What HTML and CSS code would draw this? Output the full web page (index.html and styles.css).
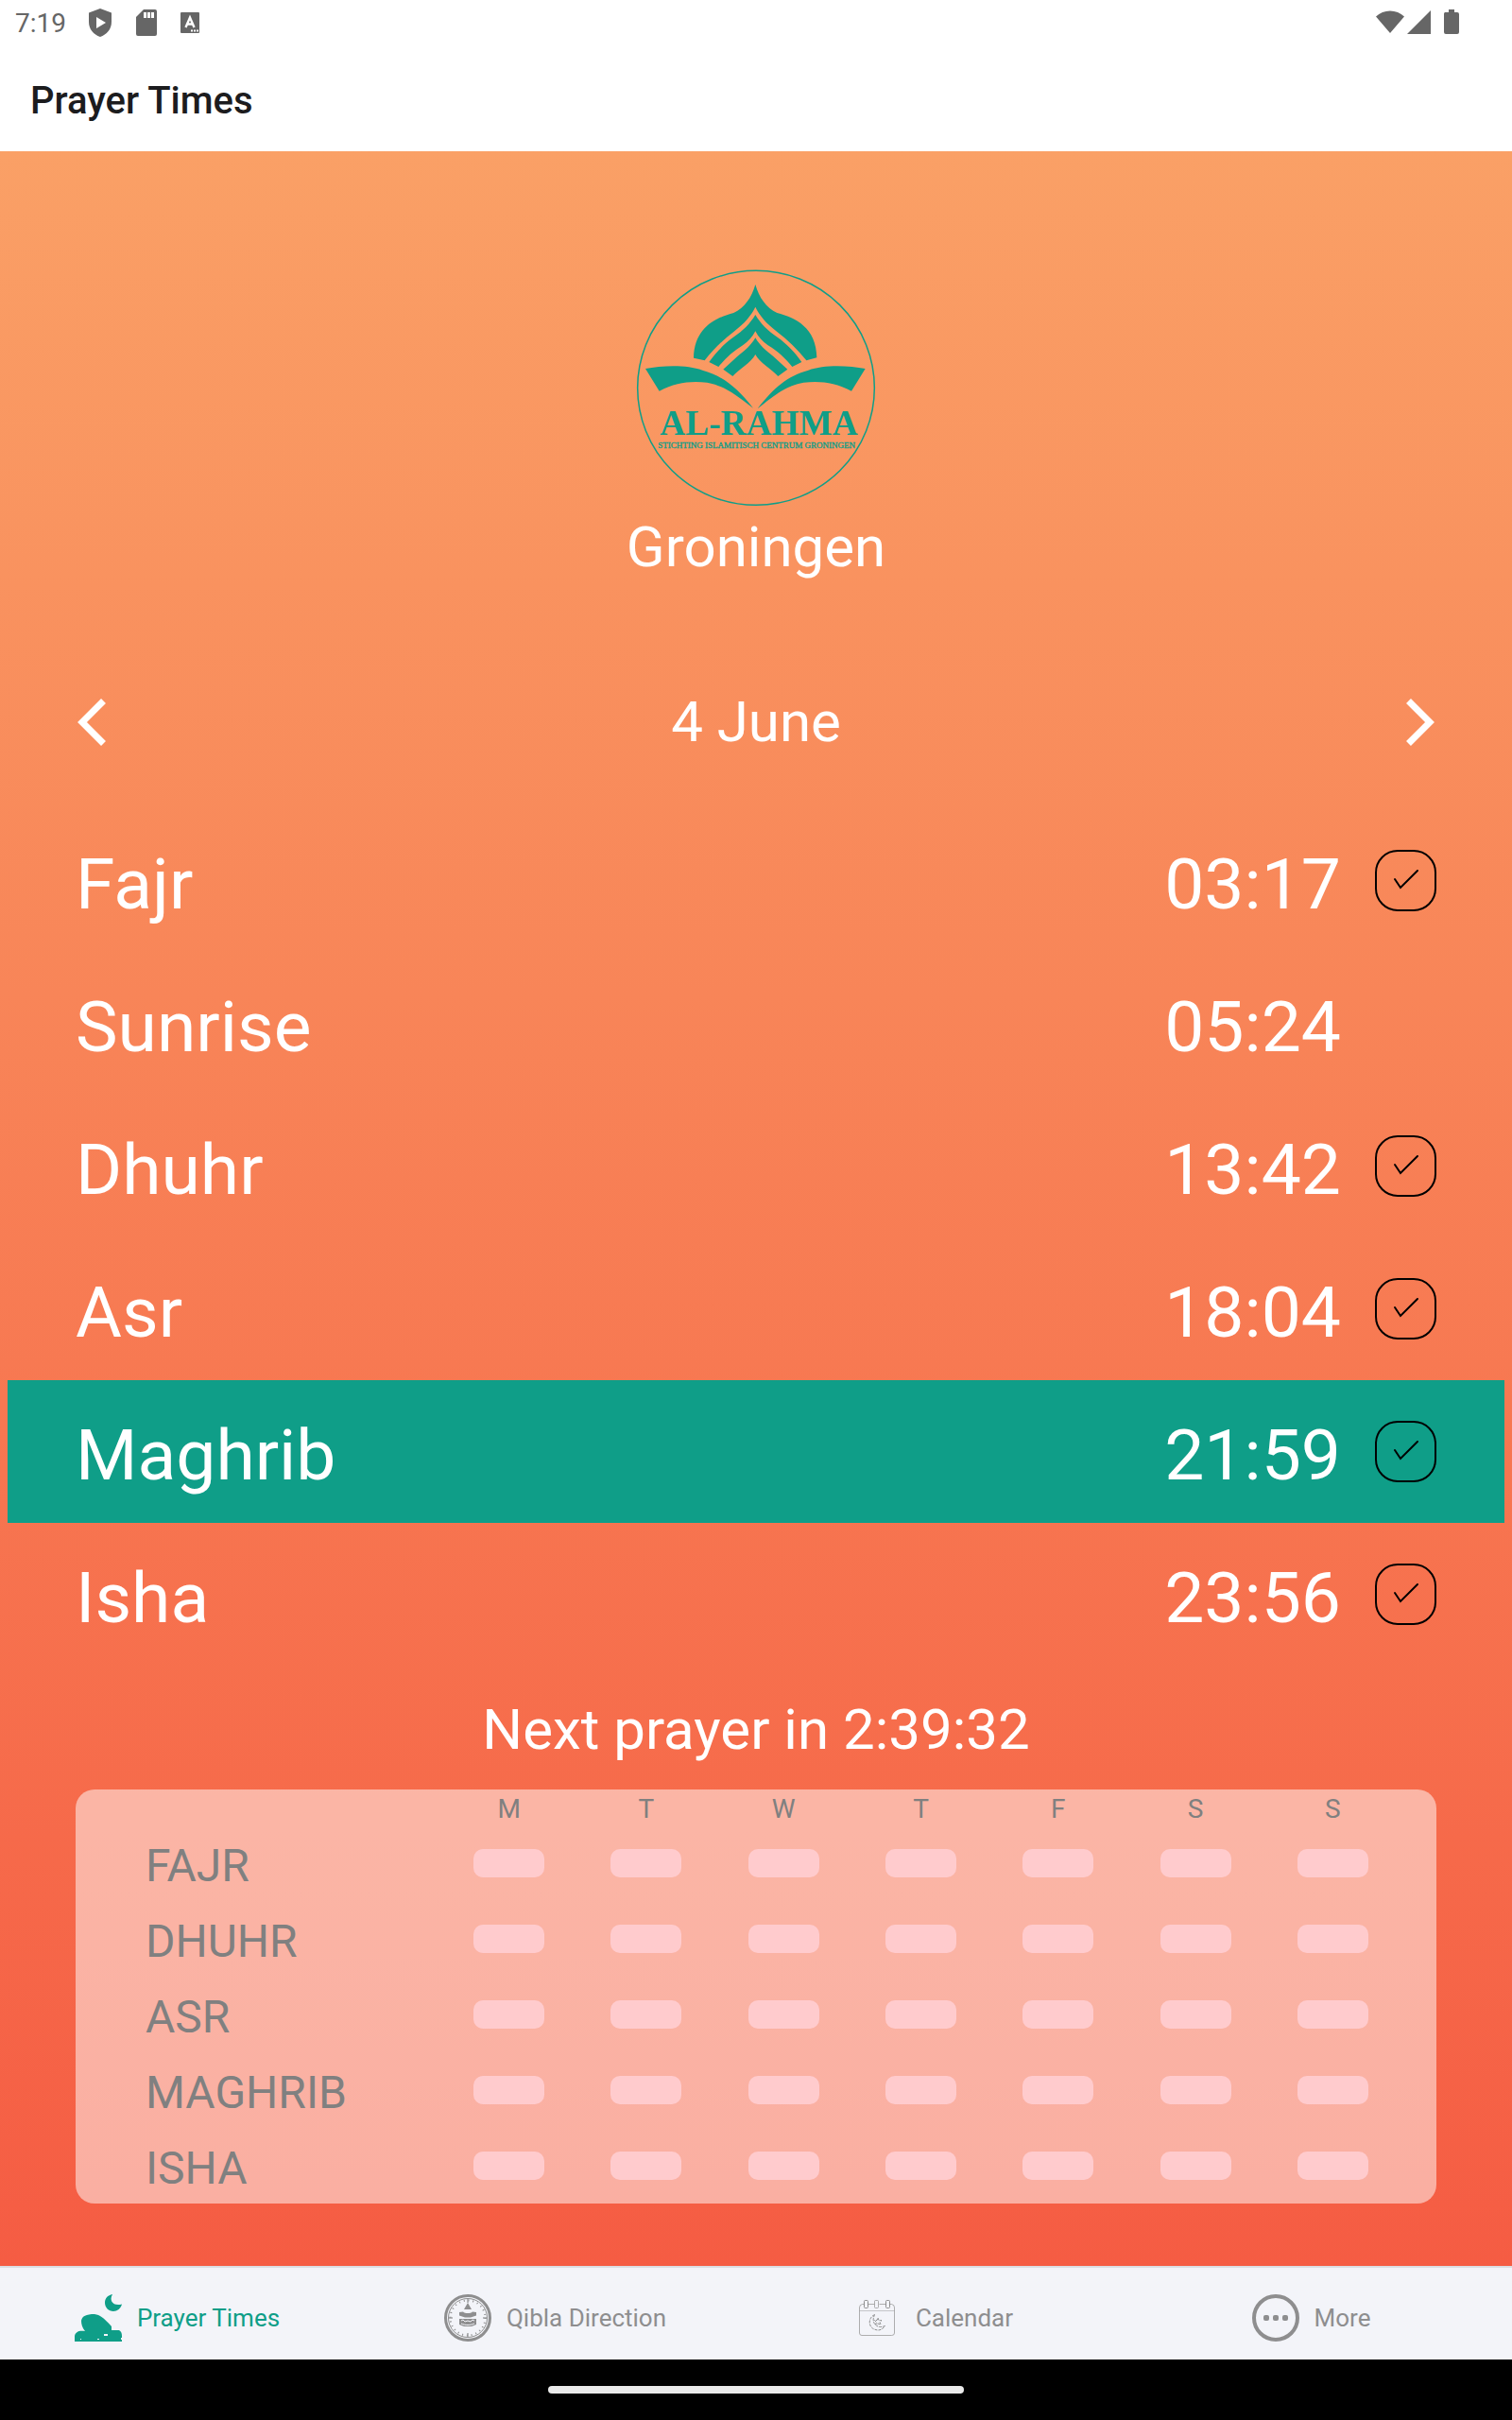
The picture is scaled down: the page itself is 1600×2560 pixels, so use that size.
FILE: index.html
```html
<!DOCTYPE html>
<html lang="en">
<head>
<meta charset="utf-8">
<meta name="viewport" content="width=device-width, initial-scale=1">
<title>Prayer Times</title>
<link rel="stylesheet" href="styles.css">
</head>
<body>
<div class="status">
  <span class="clock">7:19</span>
  <svg class="status-icon" width="26" height="32" viewBox="0 0 26 32"><path fill="currentColor" fill-rule="evenodd" d="M13 1 25 5.500V15c0 8-5 13.500-12 16C6 28.500 1 23 1 15V5.500ZM9 10v12l10-6Z"/></svg>
  <svg class="status-icon" width="22" height="28" viewBox="0 0 22 28"><path fill="currentColor" fill-rule="evenodd" d="M8 0H20a2 2 0 0 1 2 2V26a2 2 0 0 1-2 2H2a2 2 0 0 1-2-2V8ZM8 3V9h3V3ZM12 3V9h3V3ZM16 3V9h3V3Z"/></svg>
  <svg class="status-icon" width="20" height="22" viewBox="0 0 20 22"><path fill="currentColor" d="M1 0H19a1 1 0 0 1 1 1V21a1 1 0 0 1-1 1H1a1 1 0 0 1-1-1V1a1 1 0 0 1 1-1Z"/><path fill="none" stroke="#fff" stroke-width="2.400" d="M5.500 16 10 5.500l4.500 10.500M7 12.500h6"/><path fill="#fff" d="M11 18.500h2v2h-2zM14 18.500h2v2h-2zM17 18.500h2v2h-2z"/></svg>
  <svg class="status-signal" width="90" height="28" viewBox="0 0 90 28"><path fill="currentColor" d="M0 7.500C8-.5 22-.5 30 7.500L15 25ZM33 26 58 1V26ZM73 3H77V0h6V3h3a2 2 0 0 1 2 2V24a2 2 0 0 1-2 2H74a2 2 0 0 1-2-2V5a2 2 0 0 1 1-2Z"/></svg>
</div>
<header class="appbar"><h1>Prayer Times</h1></header>

<main class="screen">
  <svg class="logo" width="254" height="251" viewBox="39 45 762 753" role="img" aria-label="Al-Rahma, Stichting Islamitisch Centrum Groningen">
    <ellipse cx="420" cy="421" rx="376" ry="372" fill="none" stroke="currentColor" stroke-width="4.500"/>
    <g fill="currentColor">
      <path d="M418 93C430 135 452 166 487 183C545 198 612 230 613 325L580 334C553 300 520 268 486 242C450 214 432 192 418 164C404 192 386 214 350 242C316 268 283 300 257 334L222 326C224 230 292 198 349 183C384 166 406 135 418 93Z"/>
      <path d="M418 189C435 217 455 238 490 262C515 280 540 304 565 339L535 354C512 326 488 304 458 286C440 274 428 260 418 241C408 260 396 274 378 286C348 304 324 326 301 354L271 339C296 304 321 280 346 262C381 238 401 217 418 189Z"/>
      <path d="M418 262C432 286 450 302 475 321L520 362L490 384C470 362 432 342 418 315C404 342 366 362 346 384L316 362L361 321C386 302 404 286 418 262Z"/>
      <path d="M69 360C120 350 200 346 250 365C315 383 360 420 411 485C350 438 320 415 265 404C210 398 165 404 113 431Z"/>
      <path d="M767 360C716 350 636 346 586 365C521 383 476 420 425 487C486 438 516 415 571 404C626 398 671 404 723 431Z"/>
      <text class="logo-name" x="429" y="570">AL-RAHMA</text>
      <text class="logo-sub" x="422" y="612">STICHTING ISLAMITISCH CENTRUM GRONINGEN</text>
    </g>
  </svg>
  <p class="headline">Groningen</p>

  <div class="daybar">
    <button type="button" aria-label="Previous day"><svg width="32" height="52" viewBox="0 0 32 52"><path d="M29.500 3.500 7 26 29.500 48.500"/></svg></button>
    <h2 class="headline">4 June</h2>
    <button type="button" aria-label="Next day"><svg width="32" height="52" viewBox="0 0 32 52"><path d="M2.500 3.500 25 26 2.500 48.500"/></svg></button>
  </div>

  <ul class="prayers">
    <li><span class="name">Fajr</span><time>03:17</time><label class="tick"><input type="checkbox" aria-label="Fajr prayed"><svg viewBox="0 0 65 65"><path d="M21 31 27 40 45 22"/></svg></label></li>
    <li><span class="name">Sunrise</span><time>05:24</time><span class="tick"></span></li>
    <li><span class="name">Dhuhr</span><time>13:42</time><label class="tick"><input type="checkbox" aria-label="Dhuhr prayed"><svg viewBox="0 0 65 65"><path d="M21 31 27 40 45 22"/></svg></label></li>
    <li><span class="name">Asr</span><time>18:04</time><label class="tick"><input type="checkbox" aria-label="Asr prayed"><svg viewBox="0 0 65 65"><path d="M21 31 27 40 45 22"/></svg></label></li>
    <li class="current"><span class="name">Maghrib</span><time>21:59</time><label class="tick"><input type="checkbox" aria-label="Maghrib prayed"><svg viewBox="0 0 65 65"><path d="M21 31 27 40 45 22"/></svg></label></li>
    <li><span class="name">Isha</span><time>23:56</time><label class="tick"><input type="checkbox" aria-label="Isha prayed"><svg viewBox="0 0 65 65"><path d="M21 31 27 40 45 22"/></svg></label></li>
  </ul>

  <p class="headline next">Next prayer in 2:39:32</p>

  <section class="week">
    <table>
      <thead><tr><td class="corner"></td><th scope="col">M</th><th scope="col">T</th><th scope="col">W</th><th scope="col">T</th><th scope="col">F</th><th scope="col">S</th><th scope="col">S</th></tr></thead>
      <tbody>
        <tr><th scope="row">FAJR</th><td><i></i></td><td><i></i></td><td><i></i></td><td><i></i></td><td><i></i></td><td><i></i></td><td><i></i></td></tr>
        <tr><th scope="row">DHUHR</th><td><i></i></td><td><i></i></td><td><i></i></td><td><i></i></td><td><i></i></td><td><i></i></td><td><i></i></td></tr>
        <tr><th scope="row">ASR</th><td><i></i></td><td><i></i></td><td><i></i></td><td><i></i></td><td><i></i></td><td><i></i></td><td><i></i></td></tr>
        <tr><th scope="row">MAGHRIB</th><td><i></i></td><td><i></i></td><td><i></i></td><td><i></i></td><td><i></i></td><td><i></i></td><td><i></i></td></tr>
        <tr><th scope="row">ISHA</th><td><i></i></td><td><i></i></td><td><i></i></td><td><i></i></td><td><i></i></td><td><i></i></td><td><i></i></td></tr>
      </tbody>
    </table>
  </section>
</main>

<nav class="tabs">
  <a class="active" href="#prayer" aria-current="page">
    <svg viewBox="0 0 50 50"><path fill="currentColor" d="M40 0C36 7 41 13 50 10.500C49 15 45 18 41 18C36 18 32 14 32 9C32 4 35 1 40 0ZM0 50V44C1 40 4 38 11 39C8 35 7 32 7 28C8 23 12 21 21 21C27 22 30 24 39 34V38H47C49 39 50 41 50 44V50Z"/><path fill="#f3f4f9" d="M31 42h4v2h-4zM24 47h2v1h-2zM6 47h1v1H6zM49 46h1v2h-1z"/></svg>
    <span>Prayer Times</span></a>
  <a href="#qibla">
    <svg viewBox="0 0 50 50" fill="none" stroke="currentColor"><circle cx="25" cy="25" r="23.500" stroke-width="3"/><circle cx="25" cy="25" r="20.500"/><circle cx="25" cy="25" r="18.500" stroke-width="2" stroke-dasharray="1 3.840"/><path opacity=".6" stroke-width="2" d="M25 5v4M25 41v4M5 25h4M41 25h4"/><path fill="currentColor" stroke="none" d="M25 9 29 16H21ZM16 19 20 18.500C22 20.500 28 20.500 30 18.500L34 19V22.500L28 24.500H22L16 22.500ZM16 26 34 26V32L29 34H21L16 32Z"/><path stroke="#f3f4f9" d="M18 28l2-1 2 2 3-1 3 1 2-2 2 1M18 31c4 2 10 2 14 0"/></svg>
    <span>Qibla Direction</span></a>
  <a href="#calendar">
    <svg viewBox="0 0 50 50" fill="none" stroke="currentColor"><path opacity=".7" d="M11.500 10.500H9.500Q6.500 11 6.500 14V41Q6.500 43.500 9 43.500H40.500Q43.500 43.500 43.500 41V14Q43.500 11 40.500 10.500H38.500M15.500 10.500H22.500M27.500 10.500H34.500"/><path opacity=".45" d="M6.500 17.500H43.500"/><rect x="11.500" y="6.500" width="4" height="8" rx="1"/><rect opacity=".7" x="22.500" y="6.500" width="4" height="8" rx="1"/><rect x="34.500" y="6.500" width="4" height="8" rx="1"/><path stroke-dasharray="3 1" d="M22.500 21.500C15 25 15 37 26 38C29 38 32 36 33.500 33.500C26 37 18 31 22.500 21.500ZM26 25l1 2.500h3l-2 2 1 2.500-3-1-2.500 1 1-2.500-2-2h2.500Z"/></svg>
    <span>Calendar</span></a>
  <a href="#more">
    <svg viewBox="0 0 50 50"><circle cx="25" cy="25" r="23" fill="none" stroke="currentColor" stroke-width="4"/><g fill="currentColor"><rect x="12" y="22" width="6" height="6" rx="2"/><rect x="22" y="22" width="6" height="6" rx="2"/><rect x="32" y="22" width="6" height="6" rx="2"/></g></svg>
    <span>More</span></a>
</nav>
<div class="gesture"><span></span></div>
</body>
</html>
```
FILE: styles.css
```css
* { box-sizing: border-box; }

body {
  margin: 0;
  min-height: 100vh;
  display: flex;
  flex-direction: column;
  background: #fff;
  font-family: Roboto, "Liberation Sans", sans-serif;
}

h1, h2, p, ul { margin: 0; padding: 0; font-weight: 400; }

.status {
  height: 48px;
  padding: 0 54px 0 16px;
  display: flex;
  align-items: center;
  gap: 25px;
  color: #666;
}
.clock { padding-top: 2px; font-size: 28px; line-height: 32px; width: 52px; }
.status-signal { margin-left: auto; }

.appbar {
  height: 112px;
  padding: 6px 32px 0;
  display: flex;
  align-items: center;
}
.appbar h1 { font-size: 40px; line-height: 48px; font-weight: 500; color: #1c1c1e; }

.screen {
  flex: 1;
  padding: 125px 0 64px;
  display: flex;
  flex-direction: column;
  background: linear-gradient(#faa066, #f55c43);
  color: #fff;
}

.logo { align-self: center; color: #0f9e88; }
.logo text { font-family: "Liberation Serif", serif; text-anchor: middle; }
.logo-name { font-size: 112px; font-weight: 700; }
.logo-sub { font-size: 27px; stroke: currentColor; stroke-width: 1px; }

.headline { font-size: 60px; line-height: 70px; text-align: center; }
.logo + .headline { margin-top: 8px; }

.daybar {
  margin: 115px 80px 57px;
  display: flex;
  align-items: center;
  justify-content: space-between;
}
.daybar button {
  display: flex;
  padding: 0;
  border: 0;
  background: none;
  color: inherit;
}
.daybar path { fill: none; stroke: currentColor; stroke-width: 7; }

.prayers { margin: 0 8px; list-style: none; }
.prayers li {
  height: 151px;
  padding: 0 72px;
  display: flex;
  align-items: center;
  font-size: 75px;
  line-height: 90px;
}
.prayers .current { background: #0f9e88; }
.prayers .name { flex: 1; padding-top: 6px; }
.prayers time { padding: 6px 36px 0 0; }

.tick { width: 65px; height: 65px; display: grid; }
.tick input, .tick svg { grid-area: 1 / 1; width: 65px; height: 65px; margin: 0; }
.tick input { appearance: none; border: 2px solid #000; border-radius: 24px; }
.tick svg { pointer-events: none; fill: none; stroke: #000; stroke-width: 2; stroke-linecap: round; }

.next { margin: 33px 0 28px; }

.week {
  margin: 0 80px;
  padding: 0 37px 0 70px;
  border-radius: 20px;
  background: rgba(255, 255, 255, 0.5);
  color: #808080;
}
.week table { width: 100%; table-layout: fixed; border-collapse: collapse; }
.week th, .week td { padding: 0; font-weight: 400; text-align: center; }
.week .corner { width: 316px; }
.week thead tr { height: 38px; }
.week thead th { padding-top: 4px; font-size: 28px; line-height: 34px; }
.week tbody tr { height: 80px; }
.week tbody th { padding: 6px 0 0 4px; font-size: 48px; line-height: 56px; text-align: left; }
.week i { display: block; width: 75px; height: 30px; margin: 0 auto; border-radius: 10px; background: #ffcbcd; }

.tabs {
  height: 99px;
  border-top: 2px solid #dcdde2;
  display: grid;
  grid-template-columns: repeat(4, 1fr);
  background: #f3f4f9;
}
.tabs a {
  padding: 8px 25px 0 0;
  display: flex;
  align-items: center;
  justify-content: center;
  gap: 16px;
  color: #8e8e8f;
  font-size: 26px;
  line-height: 32px;
  text-decoration: none;
}
.tabs .active { color: #0f9e88; }
.tabs svg { width: 50px; height: 50px; }

.gesture { height: 64px; display: flex; align-items: center; justify-content: center; background: #000; }
.gesture span { width: 440px; height: 8px; border-radius: 4px; background: #eaeaea; }
```
